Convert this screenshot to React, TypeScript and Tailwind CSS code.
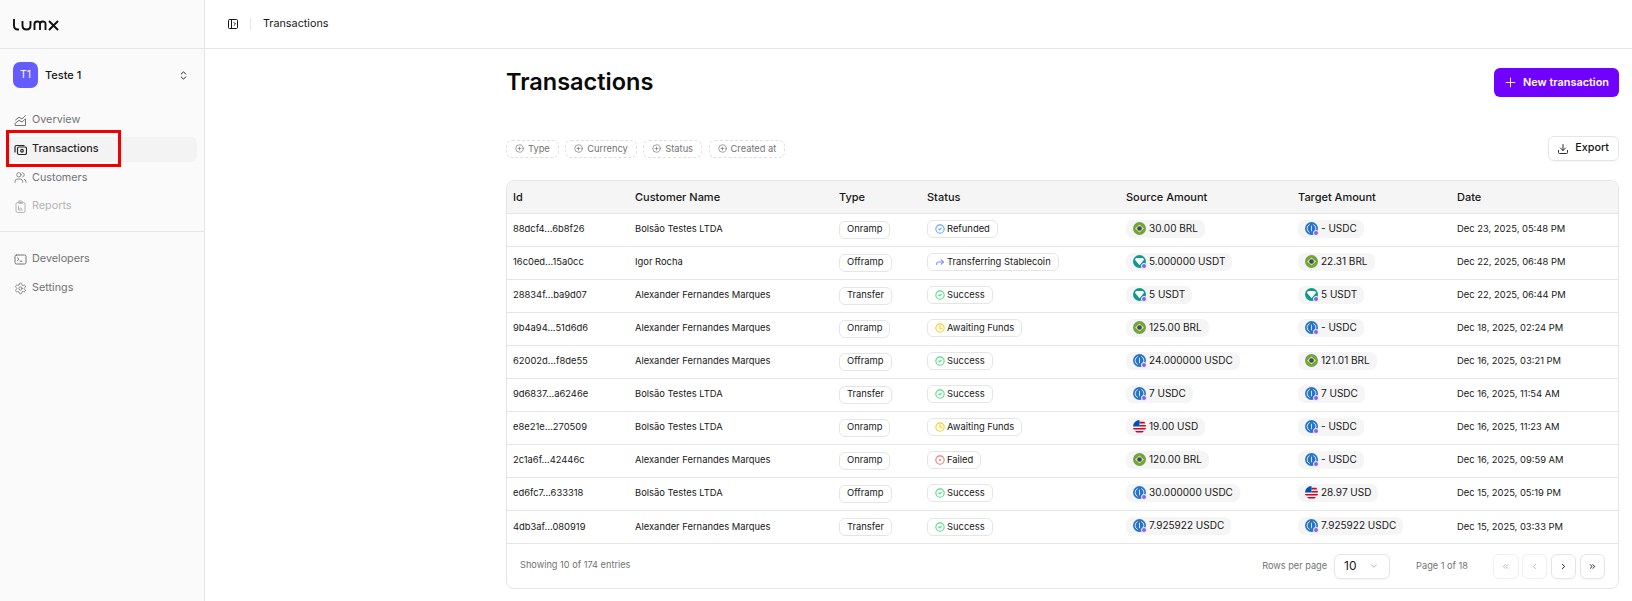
import {
  ChevronDown,
  ChevronLeft,
  ChevronRight,
  ChevronsLeft,
  ChevronsRight,
  ChevronsUpDown,
  CircleCheck,
  CircleDot,
  CirclePlus,
  Clock,
  Download,
  Forward,
  PanelLeftOpen,
  Plus,
  Settings,
  Users,
} from 'lucide-react';

type Coin = 'BRL' | 'USD' | 'USDC' | 'USDT';

interface Row {
  id: string;
  customer: string;
  type: string;
  status: 'Refunded' | 'Transferring Stablecoin' | 'Success' | 'Awaiting Funds' | 'Failed';
  source: [Coin, string];
  target: [Coin, string];
  date: string;
}

const rows: Row[] = [
  { id: '88dcf4...6b8f26', customer: 'Bolsão Testes LTDA', type: 'Onramp', status: 'Refunded', source: ['BRL', '30.00 BRL'], target: ['USDC', '- USDC'], date: 'Dec 23, 2025, 05:48 PM' },
  { id: '16c0ed...15a0cc', customer: 'Igor Rocha', type: 'Offramp', status: 'Transferring Stablecoin', source: ['USDT', '5.000000 USDT'], target: ['BRL', '22.31 BRL'], date: 'Dec 22, 2025, 06:48 PM' },
  { id: '28834f...ba9d07', customer: 'Alexander Fernandes Marques', type: 'Transfer', status: 'Success', source: ['USDT', '5 USDT'], target: ['USDT', '5 USDT'], date: 'Dec 22, 2025, 06:44 PM' },
  { id: '9b4a94...51d6d6', customer: 'Alexander Fernandes Marques', type: 'Onramp', status: 'Awaiting Funds', source: ['BRL', '125.00 BRL'], target: ['USDC', '- USDC'], date: 'Dec 18, 2025, 02:24 PM' },
  { id: '62002d...f8de55', customer: 'Alexander Fernandes Marques', type: 'Offramp', status: 'Success', source: ['USDC', '24.000000 USDC'], target: ['BRL', '121.01 BRL'], date: 'Dec 16, 2025, 03:21 PM' },
  { id: '9d6837...a6246e', customer: 'Bolsão Testes LTDA', type: 'Transfer', status: 'Success', source: ['USDC', '7 USDC'], target: ['USDC', '7 USDC'], date: 'Dec 16, 2025, 11:54 AM' },
  { id: 'e8e21e...270509', customer: 'Bolsão Testes LTDA', type: 'Onramp', status: 'Awaiting Funds', source: ['USD', '19.00 USD'], target: ['USDC', '- USDC'], date: 'Dec 16, 2025, 11:23 AM' },
  { id: '2c1a6f...42446c', customer: 'Alexander Fernandes Marques', type: 'Onramp', status: 'Failed', source: ['BRL', '120.00 BRL'], target: ['USDC', '- USDC'], date: 'Dec 16, 2025, 09:59 AM' },
  { id: 'ed6fc7...633318', customer: 'Bolsão Testes LTDA', type: 'Offramp', status: 'Success', source: ['USDC', '30.000000 USDC'], target: ['USD', '28.97 USD'], date: 'Dec 15, 2025, 05:19 PM' },
  { id: '4db3af...080919', customer: 'Alexander Fernandes Marques', type: 'Transfer', status: 'Success', source: ['USDC', '7.925922 USDC'], target: ['USDC', '7.925922 USDC'], date: 'Dec 15, 2025, 03:33 PM' },
];

function CoinIcon({ coin }: { coin: Coin }) {
  if (coin === 'BRL') {
    return (
      <svg width="13" height="13" viewBox="0 0 13 13" className="shrink-0">
        <circle cx="6.5" cy="6.5" r="6.5" fill="#6da544" />
        <path d="M6.5 2.4 11 6.5 6.5 10.6 2 6.5Z" fill="#ffda44" />
        <circle cx="6.5" cy="6.5" r="2.3" fill="#1d4f9e" />
      </svg>
    );
  }
  if (coin === 'USD') {
    return (
      <svg width="13" height="13" viewBox="0 0 13 13" className="shrink-0">
        <circle cx="6.5" cy="6.5" r="6.5" fill="#f0f0f0" />
        <path d="M6.5 1.8h4.800l1 1.700H6.500zM6.500 5h6.400v1.500H6.500zM.1 8h12.800l-.5 1.500H.6zM2 11h9l-1.600 1.400H3.600z" fill="#d80027" />
        <path d="M6.500 0A6.500 6.500 0 0 0 0 6.500h6.500z" fill="#0052b4" />
      </svg>
    );
  }
  const bg = coin === 'USDC' ? '#2775ca' : '#0f9a8e';
  return (
    <span className="relative shrink-0 w-[13px] h-[13px]">
      <svg width="13" height="13" viewBox="0 0 13 13" className="block">
        <circle cx="6.5" cy="6.5" r="6.5" fill={bg} />
        {coin === 'USDC' ? (
          <g fill="none" stroke="#fff" strokeWidth="0.8">
            <path d="M6.500 3.800v5.400" />
            <path d="M4.700 2.500a4.400 4.400 0 0 0 0 8M8.300 2.500a4.400 4.400 0 0 1 0 8" />
          </g>
        ) : (
          <path d="M3 3h7l1 1.800-4.500 5.400L2 4.800z" fill="#fff" />
        )}
      </svg>
      <span className="absolute right-[-1px] bottom-[-1px] w-[6px] h-[6px] rounded-full bg-[#8b5cf6] border border-[#f5f5f5]" />
    </span>
  );
}

function AmountPill({ value }: { value: [Coin, string] }) {
  return (
    <span className="inline-flex items-center gap-[3px] h-[18px] rounded-[7px] bg-[#f5f5f5] px-[7px] text-[10px] text-[#171717]">
      <CoinIcon coin={value[0]} />
      <span className="whitespace-nowrap">{value[1]}</span>
    </span>
  );
}

function StatusIcon({ status }: { status: Row['status'] }) {
  if (status === 'Refunded') return <CircleCheck size={10} strokeWidth={2.6} className="text-[#60a5fa]" />;
  if (status === 'Success') return <CircleCheck size={10} strokeWidth={2.6} className="text-[#4ade80]" />;
  if (status === 'Awaiting Funds') return <Clock size={10} strokeWidth={2.6} className="text-[#facc15]" />;
  if (status === 'Failed') return <CircleDot size={10} strokeWidth={2.6} className="text-[#f87171]" />;
  return <Forward size={10} strokeWidth={2.6} className="text-[#818cf8]" />;
}

function OverviewIcon() {
  return (
    <svg width="13" height="13" viewBox="0 0 13 13" fill="none" stroke="currentColor" strokeWidth="1" strokeLinejoin="round" strokeLinecap="round">
      <path d="M1.500 6 5 3.200 8 5 11.500 1.500" />
      <path d="M1.500 9 5 6.300 8 8 11.500 4.800V11.500H1.500Z" />
    </svg>
  );
}

function TransactionsIcon() {
  return (
    <svg width="13" height="13" viewBox="0 0 13 13" fill="none" stroke="currentColor" strokeWidth="1.200" strokeLinejoin="round" strokeLinecap="round">
      <rect x="3.500" y="4" width="9" height="7.500" rx="1.500" />
      <circle cx="8" cy="7.750" r="1.300" />
      <path d="M1 9V4a1.500 1.500 0 0 1 1.500-1.500H10" />
    </svg>
  );
}

function ReportsIcon() {
  return (
    <svg width="13" height="13" viewBox="0 0 13 13" fill="none" stroke="currentColor" strokeWidth="1" strokeLinejoin="round" strokeLinecap="round">
      <rect x="2" y="2.500" width="9" height="10" rx="1.500" />
      <rect x="4.500" y="1" width="4" height="2.500" rx="0.700" />
      <path d="M4.500 6v4h4M5.500 9l1-1.200 1 .7" />
    </svg>
  );
}

function DevelopersIcon() {
  return (
    <svg width="13" height="13" viewBox="0 0 13 13" fill="none" stroke="currentColor" strokeWidth="1" strokeLinejoin="round" strokeLinecap="round">
      <rect x="1" y="2" width="11" height="9" rx="1.500" />
      <path d="M3.500 4.800 5 6.200 3.500 7.600M6 8.200h2" />
    </svg>
  );
}

function NavItem({ icon, label, tone, active }: { icon: React.ReactNode; label: string; tone: string; active?: boolean }) {
  return (
    <div className={`flex items-center gap-[5px] h-[25px] pl-[7px] rounded-[6px] text-[10.8px] ${tone} ${active ? 'bg-[#f3f3f3]' : ''}`}>
      {icon}
      <span>{label}</span>
    </div>
  );
}

export default function App() {
  return (
    <div className="flex h-[601px] w-[1632px] overflow-hidden bg-white font-['Inter',sans-serif] text-[#171717]">
      {/* Sidebar */}
      <aside className="relative w-[205px] shrink-0 border-r border-[#e5e5e5] bg-[#fafafa]">
        <div className="flex h-[49px] items-center border-b border-[#e5e5e5] pl-[13px]">
          <svg width="49" height="13" viewBox="0 0 49 13" fill="none" stroke="#111" strokeWidth="1.9">
            <path d="M1 1v6.500q0 4 4 4h1" />
            <path d="M9.500 3v4.500q0 4 4 4q4 0 4-4V3" />
            <path d="M21.500 12V6q0-2.500 2.800-2.500T27 6v6M27 6q0-2.500 2.800-2.500T32.500 6v6" />
            <path d="M36 3l9 9M45 3l-9 9" />
          </svg>
        </div>
        <div className="flex items-center pl-[13px] pr-[15px] mt-[13px]">
          <div className="flex h-[26px] w-[25px] items-center justify-center rounded-[7px] bg-[#645cff] text-[10.5px] text-white">T1</div>
          <span className="ml-[7px] flex-1 text-[11px] font-medium">Teste 1</span>
          <ChevronsUpDown size={11} strokeWidth={2} />
        </div>
        <nav className="mt-[20px] flex flex-col gap-[3.7px] px-[7px]">
          <NavItem icon={<OverviewIcon />} label="Overview" tone="text-[#737373]" />
          <NavItem icon={<TransactionsIcon />} label="Transactions" tone="text-[#262626] font-medium" active />
          <NavItem icon={<Users size={13} strokeWidth={1.5} />} label="Customers" tone="text-[#737373]" />
          <NavItem icon={<ReportsIcon />} label="Reports" tone="text-[#b5b5b5]" />
        </nav>
        <div className="mt-[12px] border-t border-[#e5e5e5]" />
        <nav className="mt-[15px] flex flex-col gap-[3.7px] px-[7px]">
          <NavItem icon={<DevelopersIcon />} label="Developers" tone="text-[#737373]" />
          <NavItem icon={<Settings size={13} strokeWidth={1.5} />} label="Settings" tone="text-[#737373]" />
        </nav>
        {/* Annotation box */}
        <div className="absolute left-[6px] top-[130px] h-[37px] w-[115px] border-[3px] border-[#f00000]" />
      </aside>

      <div className="flex min-w-0 flex-1 flex-col">
        <header className="flex h-[49px] items-center border-b border-[#e5e5e5] pl-[22px] text-[10.8px]">
          <PanelLeftOpen size={12} strokeWidth={2} />
          <div className="ml-[11px] mr-[12px] h-[12px] w-px bg-[#e5e5e5]" />
          <span>Transactions</span>
        </header>

        <main className="pl-[301px] pr-[13px]">
          <div className="mt-[19px] flex items-start justify-between">
            <h1 className="text-[23.5px] font-semibold leading-[27px] text-[#0a0a0a]">Transactions</h1>
            <button className="flex h-[29px] items-center gap-[5px] rounded-[6px] bg-[#7000ff] pl-[9px] pr-[10px] text-[10.9px] font-semibold text-white">
              <Plus size={15} strokeWidth={1.5} />
              New transaction
            </button>
          </div>

          <div className="mt-[39px] flex items-center justify-between">
            <div className="flex gap-[6.5px]">
              {['Type', 'Currency', 'Status', 'Created at'].map((f) => (
                <span key={f} className="flex h-[18px] items-center gap-[4px] rounded-[6px] border border-dashed border-[#e0e0e0] px-[8px] text-[9.3px] text-[#737373]">
                  <CirclePlus size={9} strokeWidth={1.8} />
                  {f}
                </span>
              ))}
            </div>
            <button className="flex h-[25px] items-center gap-[6px] rounded-[6px] border border-[#e5e5e5] pl-[8px] pr-[9px] text-[10.8px] font-medium shadow-[0_1px_2px_rgba(0,0,0,0.04)]">
              <Download size={12} strokeWidth={1.8} />
              Export
            </button>
          </div>

          <div className="mt-[19px] overflow-hidden rounded-[8px] border border-[#e5e5e5]">
            <table className="w-full table-fixed border-collapse">
              <colgroup>
                <col className="w-[121px]" />
                <col className="w-[204px]" />
                <col className="w-[88px]" />
                <col className="w-[199px]" />
                <col className="w-[172px]" />
                <col className="w-[159px]" />
                <col />
              </colgroup>
              <thead>
                <tr className="h-[32px] bg-[#f5f5f5] text-left text-[11px]">
                  {['Id', 'Customer Name', 'Type', 'Status', 'Source Amount', 'Target Amount', 'Date'].map((h) => (
                    <th key={h} className="px-[7px] first:pl-[6px] font-medium">{h}</th>
                  ))}
                </tr>
              </thead>
              <tbody>
                {rows.map((r) => (
                  <tr key={r.id} className="h-[33px] border-t border-[#e5e5e5] text-[9.4px]">
                    <td className="pl-[6px] pr-[7px]">{r.id}</td>
                    <td className="px-[7px]">{r.customer}</td>
                    <td className="px-[7px]">
                      <span className="inline-flex h-[18px] items-center rounded-[6px] border border-[#e5e5e5] px-[7px]">{r.type}</span>
                    </td>
                    <td className="px-[7px]">
                      <span className="inline-flex h-[18px] items-center gap-[2px] rounded-[6px] border border-[#e5e5e5] pl-[7px] pr-[7px] whitespace-nowrap">
                        <StatusIcon status={r.status} />
                        {r.status}
                      </span>
                    </td>
                    <td className="px-[7px]"><AmountPill value={r.source} /></td>
                    <td className="px-[7px]"><AmountPill value={r.target} /></td>
                    <td className="px-[7px] whitespace-nowrap">{r.date}</td>
                  </tr>
                ))}
              </tbody>
            </table>
            <div className="flex h-[45px] items-center justify-between border-t border-[#e5e5e5] pl-[13px] pr-[13px] text-[9.2px] text-[#737373]">
              <span className="-mt-[3px]">Showing 10 of 174 entries</span>
              <div className="flex items-center">
                <span>Rows per page</span>
                <div className="ml-[7px] flex h-[25px] w-[56px] items-center justify-between rounded-[6px] border border-[#e5e5e5] pl-[9px] pr-[10px] text-[12px] text-[#171717] shadow-[0_1px_2px_rgba(0,0,0,0.04)]">
                  10
                  <ChevronDown size={10} className="text-[#a3a3a3]" />
                </div>
                <span className="ml-[26px] w-[51px] whitespace-nowrap">Page 1 of 18</span>
                <div className="ml-[26px] flex gap-[3.3px]">
                  <button className="flex h-[25px] w-[25.5px] items-center justify-center rounded-[6px] border border-[#efefef] text-[#a3a3a3]"><ChevronsLeft size={9} /></button>
                  <button className="flex h-[25px] w-[25.5px] items-center justify-center rounded-[6px] border border-[#efefef] text-[#a3a3a3]"><ChevronLeft size={9} /></button>
                  <button className="flex h-[25px] w-[25.5px] items-center justify-center rounded-[6px] border border-[#e5e5e5] text-[#171717] shadow-[0_1px_2px_rgba(0,0,0,0.04)]"><ChevronRight size={9} strokeWidth={2.5} /></button>
                  <button className="flex h-[25px] w-[25.5px] items-center justify-center rounded-[6px] border border-[#e5e5e5] text-[#171717] shadow-[0_1px_2px_rgba(0,0,0,0.04)]"><ChevronsRight size={9} strokeWidth={2.5} /></button>
                </div>
              </div>
            </div>
          </div>
        </main>
      </div>
    </div>
  );
}
